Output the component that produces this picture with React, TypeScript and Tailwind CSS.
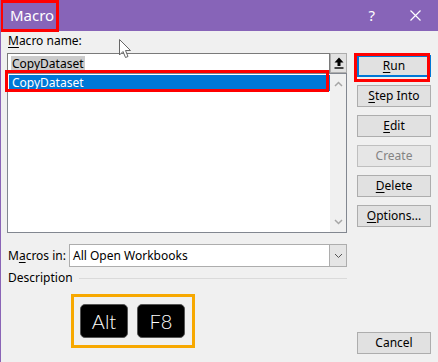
import React from 'react';

const ui = { fontFamily: '"Noto Sans", "Liberation Sans", sans-serif' };

function DlgButton({ label, hot, disabled, isDefault }: { label: string; hot?: number; disabled?: boolean; isDefault?: boolean }) {
  const border = isDefault
    ? 'border-2 border-[#0078d7] bg-[#e1e1e1]'
    : disabled
    ? 'border border-[#bfbfbf] bg-[#e6e6e6]'
    : 'border border-[#adadad] bg-[#e1e1e1]';
  return (
    <div className={`h-[22px] w-[74px] flex items-center justify-center text-[12px] ${border} ${disabled ? 'text-[#838383]' : 'text-black'}`}>
      {hot === undefined || disabled ? (
        <span>{label}</span>
      ) : (
        <span>
          {label.slice(0, hot)}
          <span className="underline underline-offset-2">{label[hot]}</span>
          {label.slice(hot + 1)}
        </span>
      )}
    </div>
  );
}

export default function App() {
  return (
    <div className="w-[438px] h-[362px] bg-[#f0f0f0] border-l border-[#8a64b6] flex flex-col relative overflow-hidden" style={ui}>
      {/* title bar */}
      <div className="h-[31px] bg-[#8764b8] flex items-center text-white shrink-0 relative">
        <span className="pl-[9px] text-[15px] font-normal">Macro</span>
        <span className="ml-auto text-[15px] font-normal mr-[35px]">?</span>
        <svg width="11" height="11" viewBox="0 0 11 11" className="mr-[17px]">
          <path d="M0.5 0.5 L10.5 10.5 M10.5 0.5 L0.5 10.5" stroke="white" strokeWidth="1.2" />
        </svg>
        <div className="absolute left-[-1px] top-0 w-[59px] h-[32px] border-[3px] border-[#ff0000]" />
      </div>

      <div className="flex flex-1">
        {/* left column */}
        <div className="w-[340px] ml-[6px] flex flex-col">
          <div className="h-[22px] flex items-end pb-[3px] pl-[1px] text-[12px] text-black">
            <span>
              <span className="underline underline-offset-2">M</span>acro name:
            </span>
          </div>
          <div className="flex h-[20px]">
            <div className="flex-1 bg-white border border-[#7a7a7a] border-b-0 flex items-center pl-[3px]">
              <span className="bg-[#cccccc] text-[12px] leading-[15px] px-[1px]">CopyDataset</span>
            </div>
            <div className="w-[17px] border border-[#adadad] bg-[#e1e1e1] flex items-center justify-center">
              <svg width="10" height="12" viewBox="0 0 10 12">
                <path d="M5 0.5 L9.5 5.5 L6.5 5.5 L6.5 9 L3.5 9 L3.5 5.5 L0.5 5.5 Z" fill="black" />
                <rect x="0.5" y="10.3" width="9" height="1.4" fill="black" />
              </svg>
            </div>
          </div>
          <div className="h-[160px] bg-white border border-[#828790] flex relative">
            <div className="flex-1 pt-[1px] pl-[1px]">
              <div className="h-[16px] bg-[#0078d7] text-white text-[12px] flex items-center pl-[3px]">CopyDataset</div>
            </div>
            <div className="w-[16px] bg-[#f0f0f0] flex flex-col items-center justify-between py-[7px]">
              <svg width="9" height="6" viewBox="0 0 9 6">
                <path d="M1 5 L4.5 1.5 L8 5" stroke="#a6a6a6" strokeWidth="1.5" fill="none" />
              </svg>
              <svg width="9" height="6" viewBox="0 0 9 6">
                <path d="M1 1 L4.5 4.5 L8 1" stroke="#a6a6a6" strokeWidth="1.5" fill="none" />
              </svg>
            </div>
            <div className="absolute left-[-3px] top-[-4px] w-[324px] h-[22px] border-[3px] border-[#ff0000]" />
          </div>

          <div className="flex items-center mt-[11px] h-[23px]">
            <span className="w-[62px] pl-[1px] text-[12px]">
              M<span className="underline underline-offset-2">a</span>cros in:
            </span>
            <div className="flex-1 h-[23px] flex bg-white border border-[#adadad]">
              <span className="flex-1 text-[12px] pl-[3px] flex items-center">All Open Workbooks</span>
              <div className="w-[17px] bg-[#e5e5e5] border-l border-[#adadad] flex items-center justify-center">
                <svg width="9" height="6" viewBox="0 0 9 6">
                  <path d="M1 1 L4.5 4.5 L8 1" stroke="#555" strokeWidth="1" fill="none" />
                </svg>
              </div>
            </div>
          </div>

          <div className="flex items-center mt-[3px] h-[16px]">
            <span className="text-[12px] pl-[1px]">Description</span>
            <div className="flex-1 h-px bg-[#dadada] ml-[6px]" />
          </div>

          <div className="ml-[64px] mt-[8px] w-[124px] h-[54px] border-[3px] border-[#f7a800] flex items-center gap-[9px] pl-[6px]">
            <div className="w-[48px] h-[34px] bg-black rounded-[5px] border border-[#555] flex items-center justify-center text-white text-[20px] font-light" style={{ fontFamily: 'Lato, sans-serif' }}>
              Alt
            </div>
            <div className="w-[48px] h-[34px] bg-black rounded-[5px] border border-[#555] flex items-center justify-center text-white text-[20px] font-light" style={{ fontFamily: 'Lato, sans-serif' }}>
              F8
            </div>
          </div>
        </div>

        {/* right column */}
        <div className="ml-[10px] flex flex-col pt-[24px] pb-[8px] relative">
          <div className="relative">
            <DlgButton label="Run" hot={0} isDefault />
            <div className="absolute left-[-3px] top-[-2px] w-[76px] h-[29px] border-[3px] border-[#ff0000]" />
          </div>
          <div className="flex flex-col gap-[8px] mt-[8px]">
            <DlgButton label="Step Into" hot={0} />
            <DlgButton label="Edit" hot={0} />
            <DlgButton label="Create" disabled />
            <DlgButton label="Delete" hot={0} />
            <DlgButton label="Options..." hot={0} />
          </div>
          <div className="mt-auto">
            <DlgButton label="Cancel" />
          </div>
        </div>
      </div>

      {/* mouse pointer */}
      <svg width="14" height="21" viewBox="0 0 14 21" className="absolute left-[118px] top-[39px]">
        <path d="M0.5 0.5 L0.5 16 L4 12.5 L6.5 18.5 L9 17.5 L6.5 11.5 L11.5 11.5 Z" fill="white" stroke="#666" strokeWidth="1" strokeLinejoin="round" />
      </svg>
    </div>
  );
}
